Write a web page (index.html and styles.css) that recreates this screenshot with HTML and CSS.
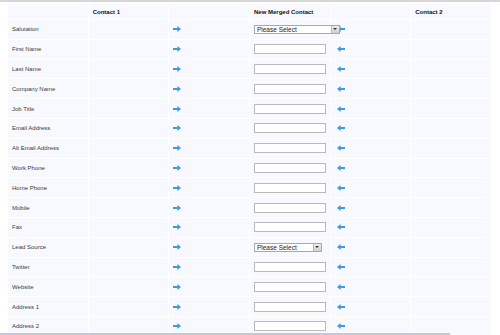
FILE: index.html
```html
<!DOCTYPE html>
<html lang="en">
<head>
  <meta charset="UTF-8">
  <title>Merge Contacts</title>
  <link rel="stylesheet" href="styles.css">
</head>
<body>
  <div class="merge-wrap">
    <table class="merge">
      <thead>
        <tr>
          <th></th>
          <th>Contact 1</th>
          <th></th>
          <th>New Merged Contact</th>
          <th></th>
          <th>Contact 2</th>
        </tr>
      </thead>
      <tbody id="rows"></tbody>
    </table>
  </div>
  <div class="scroll-thumb"></div>

  <script>
    const fields = [
      { label: 'Salutation', type: 'select', wide: true },
      { label: 'First Name' },
      { label: 'Last Name' },
      { label: 'Company Name' },
      { label: 'Job Title' },
      { label: 'Email Address' },
      { label: 'Alt Email Address' },
      { label: 'Work Phone' },
      { label: 'Home Phone' },
      { label: 'Mobile' },
      { label: 'Fax' },
      { label: 'Lead Source', type: 'select' },
      { label: 'Twitter' },
      { label: 'Website' },
      { label: 'Address 1' },
      { label: 'Address 2' }
    ];

    const right = '<svg class="arrow" width="8" height="6" viewBox="0 0 8 6"><path d="M0 1.9h4.4V0L8 3 4.4 6V4.1H0z"/></svg>';
    const left = '<svg class="arrow" width="8" height="6" viewBox="0 0 8 6"><path d="M8 1.9H3.6V0L0 3l3.6 3V4.1H8z"/></svg>';

    const tbody = document.getElementById('rows');
    fields.forEach(function (f) {
      let field;
      if (f.type === 'select') {
        field = `<span class="select${f.wide ? ' wide' : ''}"><select><option>Please Select</option></select><span class="select-btn"></span></span>`;
      } else {
        field = '<input type="text">';
      }
      const tr = document.createElement('tr');
      tr.innerHTML = `
        <td class="label">${f.label}</td>
        <td></td>
        <td>${right}</td>
        <td>${field}</td>
        <td class="back">${left}</td>
        <td></td>
      `;
      tbody.appendChild(tr);
    });
  </script>
</body>
</html>
```

FILE: styles.css
```css
body { margin: 0; font-family: "Liberation Sans", Arial, sans-serif; background: #fff; color: #333; overflow: hidden; }
.merge-wrap { border-top: 2px solid #d6d6d6; padding: 1px 0 0 7px; }
.merge { width: 485px; table-layout: fixed; border-collapse: separate; border-spacing: 1px; font-size: 6px; }
.merge th, .merge td { background: #f8f9fe; padding: 0 0 0 4px; text-align: left; vertical-align: middle; }
.merge th { height: 15px; font-weight: bold; color: #111; }
.merge td { height: 18.8px; }
.merge td.label { color: #3a3a3a; }
.merge td.back { padding-left: 6px; }
.arrow { display: block; fill: #3d9be0; }
.merge input { display: block; box-sizing: border-box; width: 72px; height: 10px; border: 1px solid #b9b9b9; background: #fff; padding: 0; margin: 0; }
.select { position: relative; display: block; width: 68px; }
.select.wide { width: 86px; }
.select select { appearance: none; display: block; box-sizing: border-box; width: 100%; height: 9px; border: 1px solid #a8a8a8; background: #fff; font: 6.5px "Liberation Sans", Arial, sans-serif; color: #222; padding: 0 0 0 2px; margin: 0; line-height: 7px; }
.select-btn { position: absolute; top: 1px; right: 1px; width: 7px; height: 7px; background: linear-gradient(#eee, #cfcfcf); border-left: 1px solid #bbb; }
.select-btn::after { content: ""; position: absolute; left: 1.5px; top: 2px; border: 2px solid transparent; border-top: 2.5px solid #333; }
.scroll-thumb { position: fixed; left: 0; bottom: 0; width: 450px; height: 2px; background: #c6c6d4; }
```
